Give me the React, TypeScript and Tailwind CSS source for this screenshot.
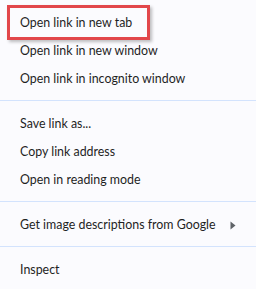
import React from "react";

const Item = ({ label, arrow = false }: { label: string; arrow?: boolean }) => (
  <div className="relative flex h-[28px] items-center pl-[20px] pr-[20px] text-[12.4px] text-[#1f1f1f]">
    <span className="flex-1 translate-y-[1px] whitespace-nowrap leading-none">{label}</span>
    {arrow && (
      <svg width="6" height="9" viewBox="0 0 6 9" className="translate-y-[1px]">
        <path d="M0.5 0.5 L5.5 4.5 L0.5 8.5 Z" fill="#5f6368" />
      </svg>
    )}
  </div>
);

const Sep = () => (
  <div className="flex h-[17px] items-center">
    <div className="h-px w-full bg-[#d3e3fd]" />
  </div>
);

export default function App() {
  return (
    <div
      className="h-[289px] w-[256px] overflow-hidden bg-[#fbfbfe] pt-[8px]"
      style={{ fontFamily: 'Lato, "Noto Sans", sans-serif' }}
    >
      <div className="relative">
        <div className="pointer-events-none absolute left-[7px] top-[-3px] h-[35px] w-[143px] border-[3px] border-[#e2474b] shadow-[2px_2px_3px_rgba(0,0,0,0.25)]" />
        <Item label="Open link in new tab" />
      </div>
      <Item label="Open link in new window" />
      <Item label="Open link in incognito window" />
      <Sep />
      <Item label="Save link as..." />
      <Item label="Copy link address" />
      <Item label="Open in reading mode" />
      <Sep />
      <Item label="Get image descriptions from Google" arrow />
      <Sep />
      <Item label="Inspect" />
    </div>
  );
}
